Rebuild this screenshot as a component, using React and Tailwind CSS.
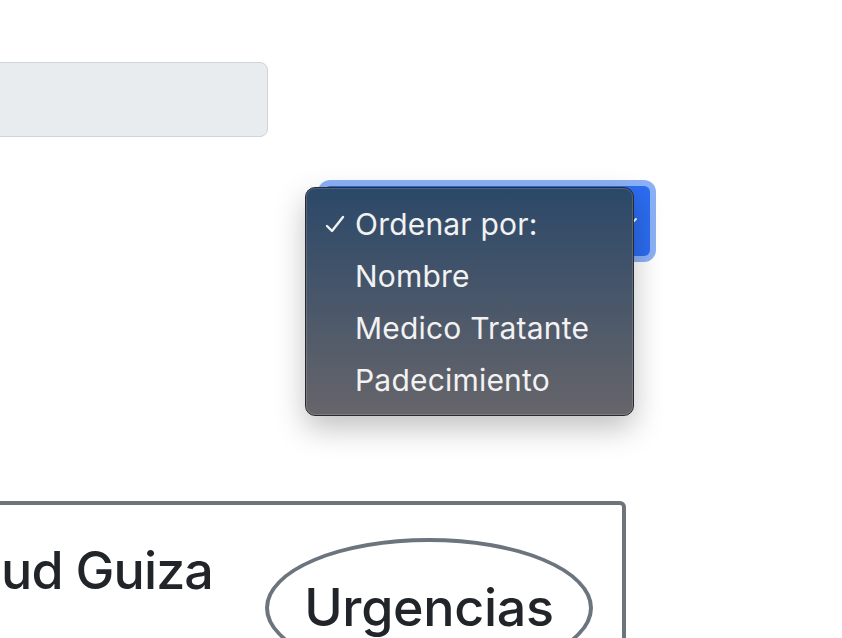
import React from "react";

const options = ["Ordenar por:", "Nombre", "Medico Tratante", "Padecimiento"];

const App = () => {
  return (
    <div
      className="relative w-[842px] h-[638px] overflow-hidden bg-white"
      style={{ fontFamily: "Inter, 'Noto Sans', sans-serif" }}
    >
      {/* search input */}
      <div className="pt-[62px]">
        <div className="ml-[-40px] w-[308px] h-[75px] bg-[#e9ecef] border border-[#ced4da] rounded-lg" />
      </div>

      {/* sort select */}
      <div className="mt-[49px] pl-[324px]">
        <div className="w-[326px] h-[70px] rounded-md bg-[#2c6cf0] ring-[6px] ring-[#8cb1f6] flex items-center justify-end pr-[12px]">
          <svg width="14" height="10" viewBox="0 0 14 10" fill="none">
            <path d="M2 3l5 5 5-5" stroke="#ffffff" strokeWidth="2" strokeLinecap="round" />
          </svg>
        </div>
      </div>

      {/* patient card */}
      <div className="mt-[245px] ml-[-20px] w-[646px] h-[200px] border-4 border-[#6c757d] rounded-md flex items-start pl-[17px] pt-[35px]">
        <div className="text-[52px] leading-[62px] font-medium text-[#212529] tracking-[-0.9px]">
          ud Guiza
        </div>
        <div className="ml-[52px] mt-[-2px] w-[328px] h-[140px] border-4 border-[#6c757d] rounded-[50%] flex items-center justify-center">
          <span className="text-[52px] leading-[62px] font-medium text-[#212529] tracking-[-0.3px]">
            Urgencias
          </span>
        </div>
      </div>

      {/* open dropdown menu */}
      <div className="absolute left-[305px] top-[187px] w-[329px] h-[229px] rounded-[10px] border border-[#2a2a2e] bg-gradient-to-b from-[#2b4868] to-[#66656a] shadow-[0_12px_30px_rgba(0,0,0,0.25)] py-[10px]">
        <div className="absolute inset-0 rounded-[9px] border border-white/15" />
        {options.map((opt, idx) => (
          <div key={opt} className="relative h-[52px] flex items-center text-[30px] tracking-[0.2px] text-[#f2f2f2]">
            <span className="w-[49px] pl-[18px] flex items-center">
              {idx === 0 && (
                <svg width="22" height="20" viewBox="0 0 22 20" fill="none">
                  <path d="M3 12l5 5L19 3" stroke="#f2f2f2" strokeWidth="2.4" strokeLinecap="round" strokeLinejoin="round" />
                </svg>
              )}
            </span>
            <span>{opt}</span>
          </div>
        ))}
      </div>
    </div>
  );
};

export default App;
